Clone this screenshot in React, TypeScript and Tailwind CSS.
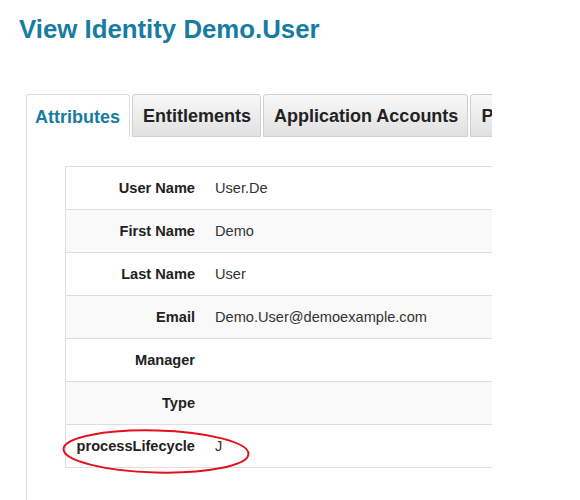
import React from 'react';

const rows: { label: string; value: string }[] = [
  { label: 'User Name', value: 'User.De' },
  { label: 'First Name', value: 'Demo' },
  { label: 'Last Name', value: 'User' },
  { label: 'Email', value: 'Demo.User@demoexample.com' },
  { label: 'Manager', value: '' },
  { label: 'Type', value: '' },
  { label: 'processLifecycle', value: 'J' },
];

const tabs = ['Attributes', 'Entitlements', 'Application Accounts', 'Policy Violations'];

export default function App() {
  return (
    <div
      className="relative w-[580px] h-[500px] overflow-hidden bg-white"
      style={{ fontFamily: '"Liberation Sans", Arial, sans-serif' }}
    >
      {/* Page title */}
      <h1 className="pl-[19px] pt-[14px] text-[25.8px] leading-[30px] font-bold text-[#177ca2]">
        View Identity Demo.User
      </h1>

      {/* Tab panel, clipped on the right */}
      <div className="mt-[50px] ml-[26px] w-[466px] overflow-hidden">
        <div className="flex items-start gap-[2px] whitespace-nowrap">
          {tabs.map((t, i) =>
            i === 0 ? (
              <div
                key={t}
                className="h-[43px] shrink-0 flex items-center pt-[2px] pl-[8px] pr-[9px] border border-b-0 border-[#dcdcdc] rounded-t-[3px] bg-white text-[18px] font-bold text-[#177ca2]"
              >
                {t}
              </div>
            ) : (
              <div
                key={t}
                className="h-[43px] shrink-0 flex items-center pt-[2px] pl-[10px] pr-[9px] border border-[#d0d0d0] rounded-t-[3px] bg-gradient-to-b from-[#f8f8f8] to-[#e1e1e1] text-[18px] font-bold text-[#222]"
              >
                {t}
              </div>
            )
          )}
        </div>

        <div className="border-l border-[#dcdcdc] pl-[38px] pt-[29px] pb-[40px]">
          <div className="w-[500px] border-l border-b border-[#dedede] text-[14.6px]">
            {rows.map((r, i) => (
              <div
                key={r.label}
                className={`flex h-[43px] items-center pt-[2px] border-t border-[#dedede] ${
                  i % 2 === 1 ? 'bg-[#f9f9f9]' : 'bg-white'
                }`}
              >
                <div className="w-[139px] shrink-0 pr-[10px] text-right font-bold text-[#222]">
                  {r.label}
                </div>
                <div className="pl-[10px] text-[#333]">{r.value}</div>
              </div>
            ))}
          </div>
        </div>
      </div>

      {/* Red annotation ellipse */}
      <svg className="absolute left-0 top-0 pointer-events-none" width="580" height="500">
        <ellipse
          cx="156"
          cy="451.5"
          rx="92.5"
          ry="21"
          fill="none"
          stroke="#e3101c"
          strokeWidth="2"
          transform="rotate(1.5 156 451.5)"
        />
      </svg>
    </div>
  );
}
